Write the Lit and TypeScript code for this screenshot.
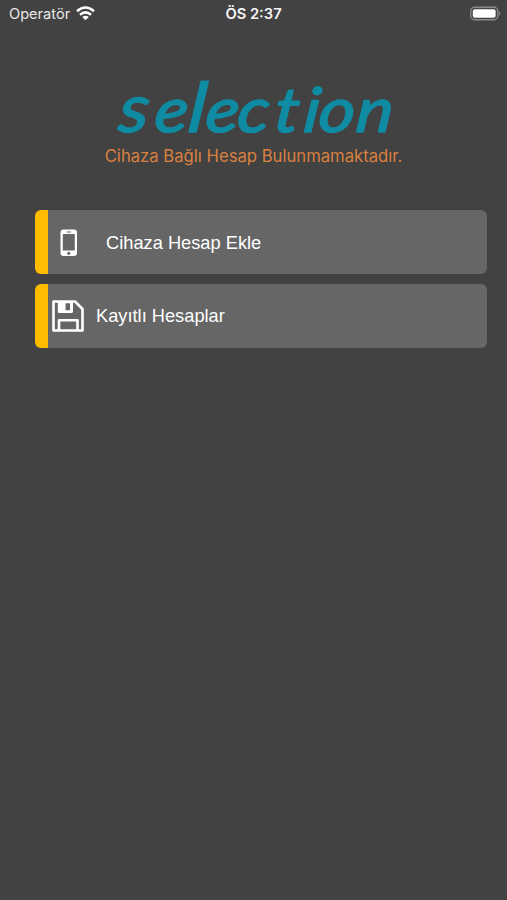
import { LitElement, html, css, svg } from "lit";
import { customElement, property } from "lit/decorators.js";

const phoneIcon = svg`<svg width="18" height="28" viewBox="0 0 18 28">
  <path fill="#fff" fill-rule="evenodd" d="M3.500 .5h10.500a3 3 0 0 1 3 3v20.500a3 3 0 0 1-3 3H3.500a3 3 0 0 1-3-3V3.500a3 3 0 0 1 3-3zM2.800 5v16.500h12V5zM6.500 2.500v1h4.500v-1zM8.750 22.700a1.600 1.600 0 1 0 0 3.200a1.600 1.600 0 0 0 0-3.200z"/>
</svg>`;

const saveIcon = svg`<svg width="32" height="32" viewBox="0 0 32 32">
  <path fill="none" stroke="#fff" stroke-width="2.600" stroke-linejoin="round" d="M1.500 1.500H23L30.500 9V30.500H1.500zM7 30V20.200H25.500V30"/>
  <path fill="#fff" fill-rule="evenodd" d="M5.800 1.500H21V11.500a1.500 1.500 0 0 1-1.500 1.500H7.300a1.500 1.500 0 0 1-1.500-1.500zM13.500 3.200v7h4.500v-7z"/>
</svg>`;

@customElement("account-action")
export class AccountAction extends LitElement {
  @property() label = "";
  @property() icon = "phone";
  static styles = css`
    :host { display: block; }
    .card {
      display: flex; align-items: center; height: 64px; box-sizing: border-box;
      background: linear-gradient(to right, #ffbc00 12.500px, #666 12.500px);
      border-radius: 6px; padding-left: 16px; color: #fff;
      font: 18.250px/24px "Liberation Sans", Arial, sans-serif;
    }
    .icon { display: flex; justify-content: center; width: 34px; }
    .label { margin-left: 11px; white-space: nowrap; }
    .phone .label { margin-left: 20px; }
    .phone .icon { padding-left: 1px; }
    .phone { padding-top: 1px; }
  `;
  render() {
    return html`<div class="card ${this.icon}">
      <span class="icon">${this.icon === "phone" ? phoneIcon : saveIcon}</span>
      <span class="label">${this.label}</span>
    </div>`;
  }
}

@customElement("app-root")
export class AppRoot extends LitElement {
  static styles = css`
    :host {
      display: block; height: 900px; background: #424242; overflow: hidden;
      font-family: Inter, sans-serif;
    }
    .status {
      display: grid; grid-template-columns: 1fr auto 1fr; align-items: center;
      height: 27px; padding: 0 6px 0 9px; color: #e8e8e8; font-size: 14.600px;
    }
    .carrier { display: flex; align-items: center; gap: 6px; }
    .time { font-weight: 600; font-size: 14.700px; color: #f4f4f4; margin-right: 3px; }
    .battery { justify-self: end; display: flex; }
    .logo { display: block; margin: 31px auto 0; overflow: visible; }
    .logo text {
      font: italic 400 62px Lato, sans-serif; fill: #0f8ba3;
      stroke: #0f8ba3; stroke-width: 1.600px; stroke-linejoin: round;
    }
    .logo .wide { font-size: 67px; }
    .logo .tall { font-size: 69px; }
    .notice {
      text-align: center; color: #d9803f;
      font-size: 16.670px; line-height: 24px; white-space: nowrap;
    }
    .actions { display: flex; flex-direction: column; gap: 10px; padding: 42px 20px 0 35px; }
  `;
  render() {
    return html`
      <header class="status">
        <span class="carrier"><span>Operatör</span>
          <svg width="19" height="15" viewBox="0 0 19 15">
            <g fill="none" stroke="#fff" stroke-width="2.500">
              <path d="M1 5.300Q9.500-2.300 18 5.300"/><path d="M4 8.700Q9.500 4 15 8.700"/>
            </g>
            <path fill="#fff" d="M6.200 10.900Q9.500 8.400 12.800 10.900L9.500 14.200z"/>
          </svg>
        </span>
        <span class="time">ÖS 2:37</span>
        <svg class="battery" width="31" height="15" viewBox="0 0 31 15">
          <rect x=".75" y="1.250" width="27" height="12.500" rx="3.800" fill="none" stroke="#8a8a8a" stroke-width="1.300"/>
          <rect x="2.800" y="3.200" width="22.800" height="8.600" rx="2" fill="#fff"/>
          <path d="M29 5v5q2.500-2.500 0-5" fill="#8a8a8a"/>
        </svg>
      </header>
      <svg class="logo" width="300" height="86" viewBox="-10 -14 300 86">
        <text transform="translate(0 60) skewX(-6) scale(1.120 1)" x="3 35 65 80.500 109 142 168 181.500 215"><tspan class="wide">s</tspan>e<tspan class="tall">l</tspan>ection</text>
      </svg>
      <div class="notice">Cihaza Bağlı Hesap Bulunmamaktadır.</div>
      <main class="actions">
        <account-action icon="phone" label="Cihaza Hesap Ekle"></account-action>
        <account-action icon="save" label="Kayıtlı Hesaplar"></account-action>
      </main>
    `;
  }
}
